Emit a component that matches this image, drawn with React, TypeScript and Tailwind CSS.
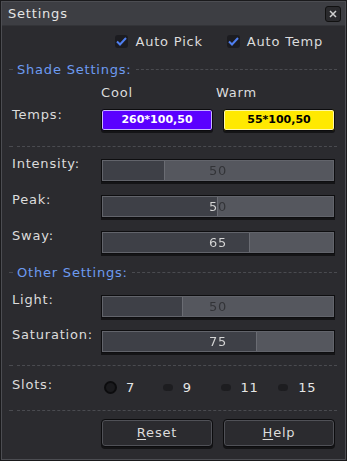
import React from "react"

const font = { fontFamily: '"DejaVu Sans", "Liberation Sans", sans-serif', letterSpacing: "0.8px" }

function Dashed({ label }: { label?: string }) {
  return (
    <div className="flex items-center gap-1 pl-[7px] pr-[8px]">
      <div className="w-[4px] border-t border-dashed border-[#4a4b50]" />
      {label && <span className="text-[#6d9bf1] text-[13px] leading-none">{label}</span>}
      <div className="flex-1 border-t border-dashed border-[#4a4b50]" />
    </div>
  )
}

function Check({ label }: { label: string }) {
  return (
    <div className="flex items-center gap-[7px]">
      <div className="w-[13px] h-[13px] rounded-[3px] bg-[#1c1c20] flex items-center justify-center">
        <svg width="11" height="9" viewBox="0 0 11 9">
          <path d="M1 4.5 L4 7.5 L10 1" stroke="#4f7ff0" strokeWidth="2" fill="none" />
        </svg>
      </div>
      <span className="text-[13px] text-[#dcdcdc]">{label}</span>
    </div>
  )
}

// value text flips colour where it crosses the filled part
function Slider({ value, pct }: { value: number; pct: number }) {
  return (
    <div className="relative h-[23px] border border-[#0e0e10] bg-[#55575e] shadow-[0_2px_0_#141416]">
      <div className="absolute left-0 top-0 bottom-0 bg-[#3e4047] border-r border-[#6a6c73]" style={{ width: `${pct}%` }} />
      <div className="absolute inset-0 border border-[#62646b] pointer-events-none" />
      <span
        className="absolute inset-0 flex items-center justify-center text-[13px] text-transparent bg-clip-text"
        style={{ backgroundImage: `linear-gradient(to right, #d6d6d6 ${pct}%, #323337 ${pct}%)` }}
      >
        {value}
      </span>
    </div>
  )
}

function Row({ label, children, mt, lt = "-mt-[2px]" }: { label: string; children: React.ReactNode; mt: string; lt?: string }) {
  return (
    <div className={`grid grid-cols-[89px_1fr] px-[10px] ${mt}`}>
      <span className={`text-[13px] text-[#dcdcdc] leading-none ${lt}`}>{label}</span>
      {children}
    </div>
  )
}

function Radio({ label, active }: { label: string; active?: boolean }) {
  return (
    <div className="flex items-center gap-[9px]">
      {active ? (
        <div className="w-[13px] h-[13px] rounded-full bg-[#1a1a1d] border-2 border-[#0c0c0e]" />
      ) : (
        <div className="w-[10px] h-[7px] rounded-full bg-[#1d1d20] mx-[1px]" />
      )}
      <span className="text-[13px] text-[#e6e6e6]">{label}</span>
    </div>
  )
}

export default function App() {
  return (
    <div style={font} className="w-[347px] h-[461px] bg-[#1a1a1c] p-[1px]">
      <div className="h-full border border-[#4c4d52] bg-[#2b2b2f] flex flex-col">
        <div className="h-[24px] bg-[#3d3e43] flex items-center justify-between pl-[6px] pr-[4px] border-b border-[#333438]">
          <span className="text-[13px] text-[#e4e4e4]">Settings</span>
          <div className="w-[16px] h-[16px] rounded-[3px] bg-[#2a2a2d] border border-[#111] flex items-center justify-center">
            <svg width="8" height="8" viewBox="0 0 8 8">
              <path d="M1 1 L7 7 M7 1 L1 7" stroke="#d0d0d0" strokeWidth="1.5" />
            </svg>
          </div>
        </div>

        <div className="flex justify-end gap-[24px] pr-[22px] mt-[6px]">
          <Check label="Auto Pick" />
          <Check label="Auto Temp" />
        </div>

        <div className="mt-[11px]"><Dashed label="Shade Settings:" /></div>

        <div className="grid grid-cols-2 gap-[10px] pl-[99px] pr-[10px] mt-[7px] text-[13px] text-[#dcdcdc]">
          <span>Cool</span>
          <span className="-ml-[7px]">Warm</span>
        </div>

        <Row label="Temps:" mt="mt-[7px]" lt="-mt-[1px]">
          <div className="grid grid-cols-2 gap-[10px]">
            <div className="h-[22px] rounded-[3px] bg-[#5a00ff] border border-[#0c0c0e] shadow-[inset_0_0_0_1px_#c9b5ff,0_2px_0_#141416] flex items-center justify-center text-[11px] font-bold text-white tracking-normal">
              260*100,50
            </div>
            <div className="h-[22px] rounded-[3px] bg-[#ffe900] border border-[#0c0c0e] shadow-[inset_0_0_0_1px_#fff7a8,0_2px_0_#141416] flex items-center justify-center text-[11px] font-bold text-black tracking-normal">
              55*100,50
            </div>
          </div>
        </Row>

        <div className="mt-[15px]"><Dashed /></div>

        <Row label="Intensity:" mt="mt-[12px]"><Slider value={50} pct={27} /></Row>
        <Row label="Peak:" mt="mt-[13px]"><Slider value={50} pct={50} /></Row>
        <Row label="Sway:" mt="mt-[13px]"><Slider value={65} pct={64} /></Row>

        <div className="mt-[12px]"><Dashed label="Other Settings:" /></div>

        <Row label="Light:" mt="mt-[16px]"><Slider value={50} pct={35} /></Row>
        <Row label="Saturation:" mt="mt-[12px]"><Slider value={75} pct={67} /></Row>

        <div className="mt-[12px]"><Dashed /></div>

        <Row label="Slots:" mt="mt-[12px]" lt="">
          <div className="grid grid-cols-4 pl-[3px]">
            <Radio label="7" active />
            <Radio label="9" />
            <Radio label="11" />
            <Radio label="15" />
          </div>
        </Row>

        <div className="mt-[12px]"><Dashed /></div>

        <div className="grid grid-cols-2 gap-[10px] pl-[99px] pr-[10px] mt-[8px]">
          <button className="h-[28px] rounded-[4px] bg-[#2b2b2f] border border-[#0c0c0e] shadow-[inset_0_0_0_1px_#505157,0_2px_0_#141416] text-[13px] text-[#dcdcdc]">
            <span className="underline underline-offset-2">R</span>eset
          </button>
          <button className="h-[28px] rounded-[4px] bg-[#2b2b2f] border border-[#0c0c0e] shadow-[inset_0_0_0_1px_#505157,0_2px_0_#141416] text-[13px] text-[#dcdcdc]">
            <span className="underline underline-offset-2">H</span>elp
          </button>
        </div>
      </div>
    </div>
  )
}
